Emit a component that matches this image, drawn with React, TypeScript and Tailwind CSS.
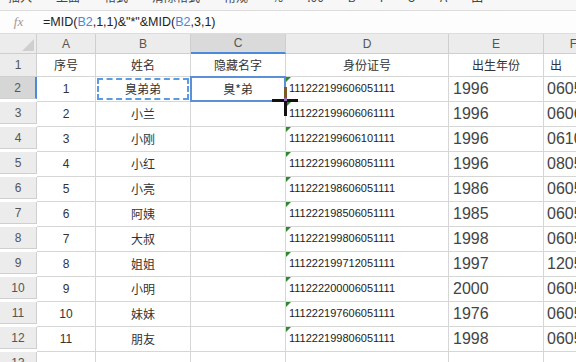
import React from "react";

const rows = [
  ["1", "臭弟弟", "111222199606051111", "1996", "0605"],
  ["2", "小兰", "111222199606061111", "1996", "0606"],
  ["3", "小刚", "111222199606101111", "1996", "0610"],
  ["4", "小红", "111222199608051111", "1996", "0805"],
  ["5", "小亮", "111222198606051111", "1986", "0605"],
  ["6", "阿姨", "111222198506051111", "1985", "0605"],
  ["7", "大叔", "111222199806051111", "1998", "0605"],
  ["8", "姐姐", "111222199712051111", "1997", "1205"],
  ["9", "小明", "111222200006051111", "2000", "0605"],
  ["10", "妹妹", "111222197606051111", "1976", "0605"],
  ["11", "朋友", "111222199806051111", "1998", "0605"],
];

const cjk = { fontFamily: '"Noto Sans CJK SC", "Noto Sans", sans-serif' };
const arial = { fontFamily: '"Liberation Sans", Arial, "Noto Sans CJK SC", sans-serif' };

function Tri() {
  return (
    <span className="absolute left-0 top-0 w-0 h-0 border-t-[5px] border-r-[5px] border-t-[#2f8a2f] border-r-transparent" />
  );
}

export default function App() {
  const cell = "border-r border-b border-[#d6d6d6] h-full flex items-center relative";
  return (
    <div className="w-[576px] h-[362px] overflow-hidden bg-white relative text-[#333]" style={arial}>
      {/* toolbar (clipped) */}
      <div className="h-[10px] overflow-hidden bg-[#f7f7f7] px-2 text-[12px] text-[#444]" style={cjk}>
        <div className="flex gap-6 -mt-[11px] leading-[16px]">
          <span>插入</span><span>上面</span><span>格式</span><span>清除格式</span><span>常规</span><span>%</span><span>.00</span><span>B</span><span>I</span><span>U</span><span>A</span><span>田</span>
        </div>
      </div>
      {/* formula bar */}
      <div className="h-[24px] flex items-center border-t border-b border-[#dcdcdc] bg-[#fdfdfd]">
        <div className="w-[37px] flex justify-center text-[#999] text-[13px] italic" style={{ fontFamily: '"Liberation Serif", serif' }}>fx</div>
        <div className="pl-[6px] text-[12.5px] text-[#222]">
          =MID(<span className="text-[#3d8bdc]">B2</span>,1,1)&amp;"*"&amp;MID(<span className="text-[#3d8bdc]">B2</span>,3,1)
        </div>
      </div>
      {/* sheet */}
      <div className="grid grid-cols-[37px_59px_95px_95px_163px_95px_60px]">
        {/* header row */}
        <div className="h-[20px] bg-[#ececec] border-r border-b border-[#cfcfcf] relative">
          <span className="absolute right-[2px] bottom-[2px] w-0 h-0" style={{ borderBottom: "12px solid #cfcfcf", borderLeft: "12px solid transparent" }} />
        </div>
        {["A", "B", "C", "D", "E", "F"].map((c) => (
          <div
            key={c}
            className={
              "h-[20px] flex items-center justify-center text-[12px] text-[#555] border-r border-[#cfcfcf] " +
              (c === "C" ? "bg-[#dadada] border-b-2 border-b-[#4a89dc]" : "bg-[#ececec] border-b")
            }
          >
            {c}
          </div>
        ))}

        {/* row 1 */}
        <div className="h-[22.7px] bg-[#ececec] border-r border-b border-[#cfcfcf] flex items-center justify-center text-[12px] text-[#555]">1</div>
        {["序号", "姓名", "隐藏名字", "身份证号", "出生年份", "出"].map((t, i) => (
          <div key={i} className={cell + (i === 5 ? " justify-start pl-[6px]" : " justify-center")}>
            <span className="text-[12px] text-[#333]" style={cjk}>{t}</span>
          </div>
        ))}

        {rows.map((r, idx) => {
          const n = idx + 2;
          const sel = n === 2;
          return (
            <React.Fragment key={n}>
              <div
                className={
                  "h-[22.7px] border-b border-[#cfcfcf] flex items-center justify-center text-[12px] text-[#555] " +
                  (sel ? "bg-[#d6d6d6] border-r-2 border-r-[#4a89dc]" : "bg-[#ececec] border-r")
                }
              >
                {n}
              </div>
              <div className={cell + " justify-center"}>
                <span className="text-[12px]">{r[0]}</span>
              </div>
              <div className={cell + " justify-center"}>
                <span className="text-[12px]" style={cjk}>{r[1]}</span>
                {sel && <span className="absolute inset-[1px] border-2 border-dashed border-[#5b9be0]" />}
              </div>
              <div className={cell + " justify-center"}>
                {sel && (
                  <>
                    <span className="text-[12px]" style={cjk}>臭*弟</span>
                    <span className="absolute inset-[-1px] border-2 border-[#5b8fd6]" />
                  </>
                )}
              </div>
              <div className={cell + " justify-start pl-[3px]"}>
                <Tri />
                <span className="text-[11px] text-[#222]">{r[2]}</span>
              </div>
              <div className={cell + " justify-start pl-[4px]"}>
                <span className="text-[16px] text-[#444]">{r[3]}</span>
              </div>
              <div className={cell + " justify-start pl-[3px]"}>
                <span className="text-[16px] text-[#444]">{r[4]}</span>
              </div>
            </React.Fragment>
          );
        })}

        {[13, 14].map((n) => (
          <React.Fragment key={n}>
            <div className="h-[22.7px] bg-[#ececec] border-r border-b border-[#cfcfcf] flex items-center justify-center text-[12px] text-[#555]">{n}</div>
            {[0, 1, 2, 3, 4, 5].map((i) => (
              <div key={i} className={cell} />
            ))}
          </React.Fragment>
        ))}
      </div>

      {/* crosshair cursor */}
      <svg className="absolute left-[270px] top-[86px]" width="32" height="32" viewBox="0 0 32 32">
        <rect x="14" y="1" width="3" height="11" fill="#7a5a2a" />
        <rect x="14" y="12" width="3" height="18" fill="#111" />
        <rect x="2" y="13" width="26" height="3" fill="#111" />
        <rect x="14" y="12" width="3" height="3" fill="#9a6ab0" />
      </svg>
    </div>
  );
}
